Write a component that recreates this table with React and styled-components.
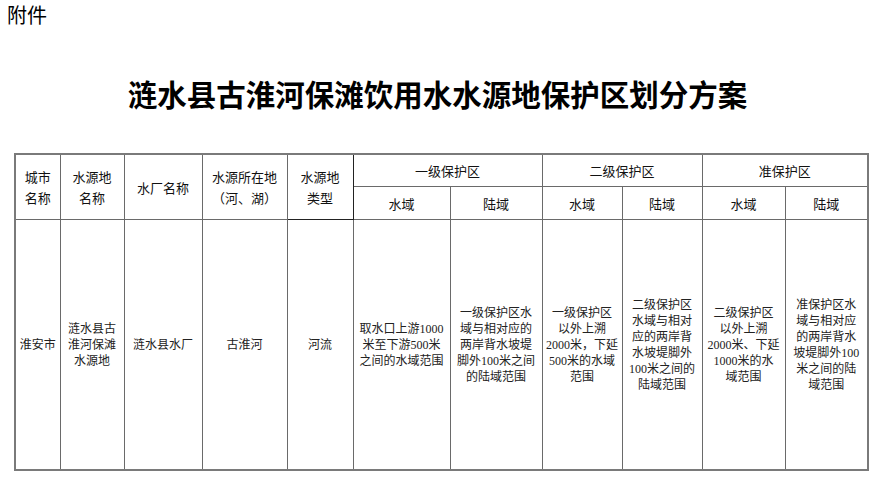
import React from 'react';
import styled, { createGlobalStyle } from 'styled-components';

const GlobalStyle = createGlobalStyle`
  html, body {
    margin: 0;
    padding: 0;
    background: #fff;
  }
  body {
    width: 880px;
    height: 480px;
    overflow: hidden;
    font-family: "Noto Sans CJK SC", sans-serif;
    color: #000;
  }
`;

const Page = styled.div`
  display: flex;
  flex-direction: column;
  padding: 0 0 0 14px;
`;

const Attachment = styled.div`
  font-size: 20px;
  line-height: 30px;
  margin-left: -7px;
  height: 30px;
`;

const Title = styled.h1`
  margin: 0;
  font-family: "Noto Sans CJK SC", sans-serif;
  font-weight: 700;
  font-size: 29.5px;
  line-height: 40px;
  text-align: center;
  width: 853px;
  padding-top: 43px;
  padding-right: 6px;
  height: 80px;
  box-sizing: border-box;
`;

const Sheet = styled.table`
  margin-top: 43px;
  border-collapse: collapse;
  table-layout: fixed;
  width: 853px;
  border: 2px solid #7a7a7a;
`;

const HeadCell = styled.th`
  border: 1px solid ${(p) => (p.$dark ? '#222' : '#6a6a6a')};
  font-weight: 400;
  font-size: 13px;
  line-height: 21px;
  height: ${(p) => p.$h || 31}px;
  padding: 0 2px;
  text-align: center;
  vertical-align: middle;
  color: #111;
`;

const BodyCell = styled.td`
  border: 1px solid #6a6a6a;
  height: 249px;
  padding: 0 2px;
  text-align: center;
  vertical-align: middle;
  font-family: "Liberation Serif", "Noto Sans CJK SC", serif;
  font-size: 12px;
  line-height: 16px;
  color: #222;
`;

const Line = styled.span`
  display: block;
  white-space: nowrap;
`;

const widths = [45, 64, 78, 85, 66, 97, 92, 80, 80, 83, 83];

const body = [
  ['淮安市'],
  ['涟水县古', '淮河保滩', '水源地'],
  ['涟水县水厂'],
  ['古淮河'],
  ['河流'],
  ['取水口上游1000', '米至下游500米', '之间的水域范围'],
  ['一级保护区水', '域与相对应的', '两岸背水坡堤', '脚外100米之间', '的陆域范围'],
  ['一级保护区', '以外上溯', '2000米，下延', '500米的水域', '范围'],
  ['二级保护区', '水域与相对', '应的两岸背', '水坡堤脚外', '100米之间的', '陆域范围'],
  ['二级保护区', '以外上溯', '2000米、下延', '1000米的水', '域范围'],
  ['准保护区水', '域与相对应', '的两岸背水', '坡堤脚外100', '米之间的陆', '域范围'],
];

const lines = (arr) => arr.map((t, i) => <Line key={i}>{t}</Line>);

export default function App() {
  return (
    <>
      <GlobalStyle />
      <Page>
        <Attachment>附件</Attachment>
        <Title>涟水县古淮河保滩饮用水水源地保护区划分方案</Title>
        <Sheet>
          <colgroup>
            {widths.map((w, i) => (
              <col key={i} style={{ width: w }} />
            ))}
          </colgroup>
          <thead>
            <tr>
              <HeadCell rowSpan={2}>{lines(['城市', '名称'])}</HeadCell>
              <HeadCell rowSpan={2}>{lines(['水源地', '名称'])}</HeadCell>
              <HeadCell rowSpan={2}>水厂名称</HeadCell>
              <HeadCell rowSpan={2}>{lines(['水源所在地', '（河、湖）'])}</HeadCell>
              <HeadCell rowSpan={2} $dark>{lines(['水源地', '类型'])}</HeadCell>
              <HeadCell colSpan={2}>一级保护区</HeadCell>
              <HeadCell colSpan={2}>二级保护区</HeadCell>
              <HeadCell colSpan={2}>准保护区</HeadCell>
            </tr>
            <tr>
              <HeadCell $h={32}>水域</HeadCell>
              <HeadCell $h={32}>陆域</HeadCell>
              <HeadCell $h={32}>水域</HeadCell>
              <HeadCell $h={32}>陆域</HeadCell>
              <HeadCell $h={32}>水域</HeadCell>
              <HeadCell $h={32}>陆域</HeadCell>
            </tr>
          </thead>
          <tbody>
            <tr>
              {body.map((cell, i) => (
                <BodyCell key={i}>{lines(cell)}</BodyCell>
              ))}
            </tr>
          </tbody>
        </Sheet>
      </Page>
    </>
  );
}
